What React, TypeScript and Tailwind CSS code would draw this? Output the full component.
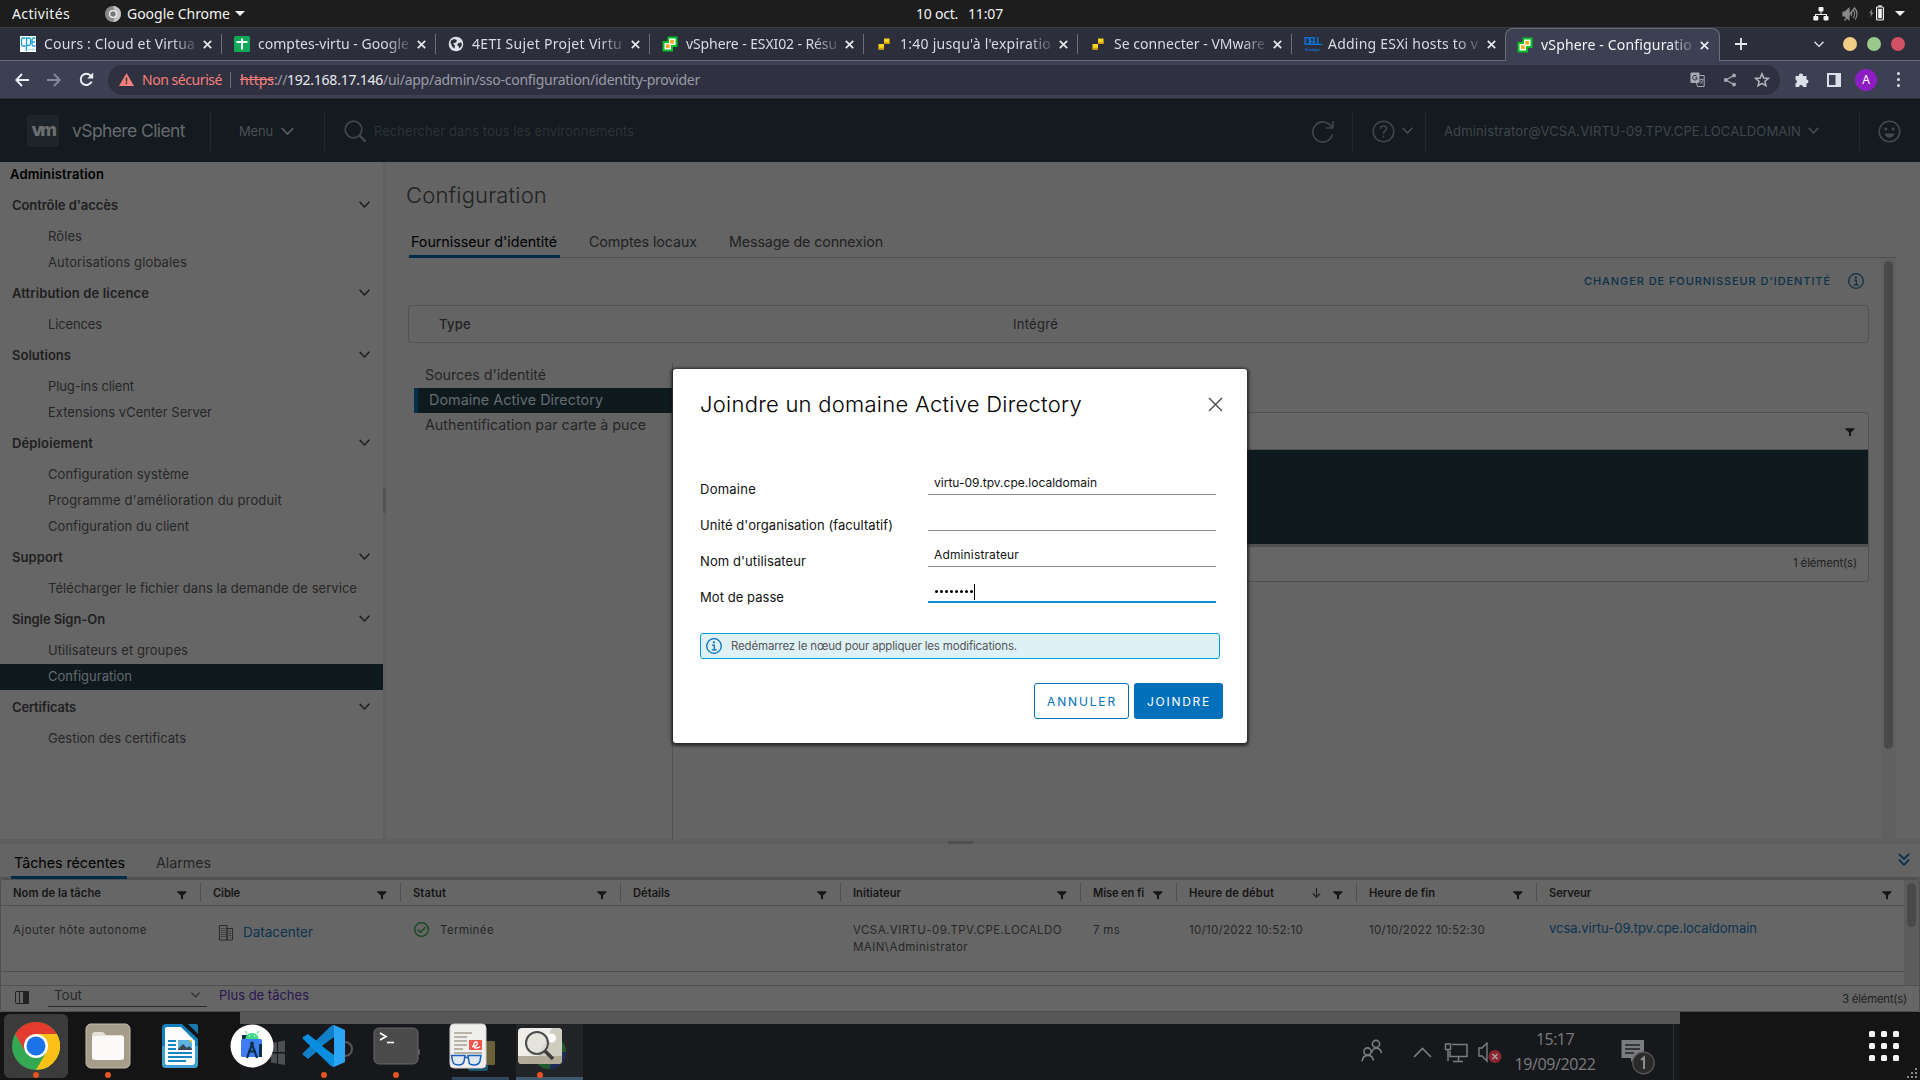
import { useLayoutEffect, useRef, useState } from "react";
import type { ReactNode } from "react";

/** One line of text tracked so that it fills exactly `w` pixels. */
function T({ w, children, className = "" }: { w: number; children: string; className?: string }) {
  const ref = useRef<HTMLSpanElement>(null);
  const [tracking, setTracking] = useState(0);
  useLayoutEffect(() => {
    if (ref.current) {
      const natural = ref.current.getBoundingClientRect().width;
      setTracking((w - natural) / children.length);
    }
  }, [w, children]);
  return (
    <span className={`block shrink-0 whitespace-pre ${className}`} style={{ width: w }}>
      <span ref={ref} style={{ letterSpacing: tracking }}>
        {children}
      </span>
    </span>
  );
}

function Chevron({ className = "", size = 11 }: { className?: string; size?: number }) {
  return (
    <svg width={size} height={size * 0.64} viewBox="0 0 11 7" className={`shrink-0 ${className}`} fill="none" stroke="currentColor" strokeWidth="1.4">
      <path d="M0.6 0.8 5.5 5.9 10.4 0.8" />
    </svg>
  );
}

function Filter({ className = "" }: { className?: string }) {
  return (
    <svg width="10" height="9" viewBox="0 0 10 9" className={`shrink-0 ${className}`} fill="#161616">
      <path d="M0.3 0.3h9.2v0.9L6 4.4V8.6L4 7.7V4.4L0.3 1.2z" />
    </svg>
  );
}

function Info({ size, className = "" }: { size: number; className?: string }) {
  return (
    <svg width={size} height={size} viewBox="0 0 16 16" className={`shrink-0 ${className}`} fill="none" stroke="currentColor">
      <circle cx="8" cy="8" r="7.3" strokeWidth="1.3" />
      <circle cx="7.9" cy="4.3" r="1.1" fill="currentColor" stroke="none" />
      <path d="M6 7.2h2.3v4.4M5.7 11.9h5" strokeWidth="1.3" />
    </svg>
  );
}

/* ---------- desktop top bar ---------- */

function TopBar() {
  return (
    <div className="flex h-[27px] shrink-0 items-center bg-[#1d1d1d] font-['Noto_Sans',sans-serif] text-[14px] leading-[20px] text-[#f2f2f2]">
      <T w={58} className="ml-[12px]">Activités</T>
      <svg width="16" height="16" viewBox="0 0 16 16" className="ml-[35px]">
        <circle cx="8" cy="8" r="8" fill="#8a8a8a" />
        <path d="M8 0a8 8 0 0 1 8 8 8 8 0 0 1-8 8l3-8z" fill="#c4c4c4" />
        <circle cx="8" cy="8" r="3.4" fill="#777" stroke="#f4f4f4" strokeWidth="1.3" />
      </svg>
      <T w={103} className="ml-[6px]">Google Chrome</T>
      <div className="ml-[5px] h-0 w-0 border-x-[5px] border-t-[5px] border-x-transparent border-t-[#f2f2f2]" />
      <T w={42} className="ml-[671px]">10 oct.</T>
      <T w={35} className="ml-[10px]">11:07</T>
      <svg width="16" height="14" viewBox="0 0 16 14" className="ml-[810px]" fill="#f2f2f2">
        <rect x="5.5" y="0" width="5" height="4.5" rx="1" />
        <rect x="0.3" y="9" width="5" height="4.6" rx="1" />
        <rect x="10.5" y="9" width="5" height="4.6" rx="1" />
        <path d="M7.5 4h1v3H14v2.4h-1V8H3v1.4H2V7h5.5z" />
      </svg>
      <svg width="16" height="14" viewBox="0 0 16 14" className="ml-[13px]" fill="none" stroke="#8a8a8a" strokeWidth="1.2">
        <path d="M1 5h2l4-3.6v11.2L3 9H1z" fill="#8a8a8a" />
        <path d="M9 5c1 1 1 3 0 4M11 3c2 2.300 2 5.700 0 8M13 1.500c2.600 3 2.600 8 0 11M2.500 13.500 13 0.500" />
      </svg>
      <svg width="16" height="16" viewBox="0 0 16 16" className="-mt-[2px] ml-[11px]">
        <path d="M3.500 3.500 0.300 8.300h2l-1 4L4.400 7.500h-2z" fill="#9a9a9a" />
        <rect x="7.600" y="2" width="6.800" height="13" rx="1" fill="none" stroke="#f2f2f2" strokeWidth="1.200" />
        <rect x="9.200" y="3.800" width="3.600" height="9.500" fill="#f2f2f2" />
        <rect x="9.300" y="0.300" width="3.400" height="1.500" fill="#f2f2f2" />
      </svg>
      <div className="ml-[10px] h-0 w-0 border-x-[5px] border-t-[5px] border-x-transparent border-t-[#f2f2f2]" />
    </div>
  );
}

/* ---------- browser tabs ---------- */

const CpeIcon = () => (
  <svg width="16" height="16" viewBox="0 0 16 16">
    <rect width="16" height="16" fill="#fff" />
    <path d="M5.500 2H3Q1.500 2 1.500 4v4Q1.500 10 3 10h2.500M6.500 15V2h2.500q1.500 0 1.500 2v3.500q0 2-1.500 2H7M15.500 2H13.500q-1.500 0-1.500 2v4q0 2 1.500 2h2M12 6h3" fill="none" stroke="#1a9fdc" strokeWidth="1.300" />
    <path d="M8.500 13.500h6.500" stroke="#7fc4e6" strokeWidth="1.500" strokeDasharray="1.200 0.600" />
  </svg>
);
const SheetIcon = () => (
  <svg width="16" height="16" viewBox="0 0 16 16">
    <rect width="16" height="16" rx="1.500" fill="#0fa958" />
    <path d="M8 2.500v11M2.500 6h11" stroke="#fff" strokeWidth="2" />
  </svg>
);
const GlobeIcon = () => (
  <svg width="16" height="16" viewBox="0 0 16 16">
    <circle cx="8" cy="8" r="7.300" fill="#dfe1ea" />
    <path d="M3 4.500 6 3l3 1-1 2.500-3 1L7 9.500l-.5 3L4.500 11 2.500 7zM10.500 7l3-.5.300 3-2.300 3-1-2.500-1.500-1z" fill="#2c2e3b" />
  </svg>
);
const VsphereIcon = () => (
  <svg width="16" height="16" viewBox="0 0 16 16">
    <path d="M5.500 0.500H15.500V11H11V15.500H0.500V5H5.500z" fill="#0bbf26" />
    <path d="M7 2.500H13.500V9H9V13.500H2.500V7H7z" fill="#fff" />
    <rect x="8.300" y="4" width="3.600" height="3.600" fill="#f7a916" />
    <rect x="4" y="8.300" width="3.600" height="3.600" fill="#f7a916" />
  </svg>
);
const VmIcon = () => (
  <svg width="16" height="16" viewBox="0 0 16 16">
    <path d="M8 2.500h5.500V8H8z" fill="#f9d71c" />
    <path d="M2.500 8h5.500v5.500H2.500z" fill="#f9d71c" />
    <path d="M8 6.300h5.500V8H8zM2.500 11.800H8v1.700H2.500z" fill="#d59a0a" />
  </svg>
);
const DellIcon = () => (
  <div className="flex h-[16px] w-[16px] flex-col items-center justify-center font-['Liberation_Sans',sans-serif] text-[#0b74d8]">
    <T w={16} className="text-[10px] leading-[10px] font-bold">DELL</T>
    <T w={15} className="text-[4px] leading-[5px]">Technologies</T>
  </div>
);

const tabs: { icon: ReactNode; title: string; w: number; active?: boolean }[] = [
  { icon: <CpeIcon />, title: "Cours : Cloud et Virtua", w: 151 },
  { icon: <SheetIcon />, title: "comptes-virtu - Google", w: 151 },
  { icon: <GlobeIcon />, title: "4ETI Sujet Projet Virtu", w: 150 },
  { icon: <VsphereIcon />, title: "vSphere - ESXI02 - Résu", w: 151 },
  { icon: <VmIcon />, title: "1:40 jusqu'à l'expiratio", w: 151 },
  { icon: <VmIcon />, title: "Se connecter - VMware", w: 151 },
  { icon: <DellIcon />, title: "Adding ESXi hosts to v", w: 150 },
  { icon: <VsphereIcon />, title: "vSphere - Configuratio", w: 151, active: true },
];

function TabStrip() {
  return (
    <div className="flex h-[34px] shrink-0 border-t border-[#3c3d45] bg-[#2c2e3b] font-['Noto_Sans',sans-serif] text-[14px] leading-[20px]">
      <div className="w-[8px] border-b border-[#6c6e7a]" />
      {tabs.map((t, i) => (
        <div
          key={i}
          className={
            t.active
              ? "-ml-px flex w-[215px] items-center rounded-t-[8px] border-x border-t border-[#6c6e7a] bg-[#3c4052] pl-[11px] text-[#f4f5f8]"
              : "flex w-[214px] items-center border-b border-[#6c6e7a] pl-[12px] text-[#d9dbe4]"
          }
        >
          {t.icon}
          <div className="ml-[8px] w-[152px] [mask-image:linear-gradient(to_right,black_84%,rgba(0,0,0,0.15)_100%)]">
            <T w={t.w}>{t.title}</T>
          </div>
          <svg width="9" height="9" viewBox="0 0 9 9" className="ml-[7px]" stroke="#e8e9ef" strokeWidth="1.700">
            <path d="M0.800 0.800 8.200 8.200M8.200 0.800 0.800 8.200" />
          </svg>
          {i < 6 && <div className="ml-[9px] h-[20px] w-px bg-[#6c6e7a]" />}
        </div>
      ))}
      <div className="flex flex-1 items-center border-b border-[#6c6e7a]">
        <svg width="12" height="12" viewBox="0 0 12 12" className="ml-[15px]" stroke="#e8e9ef" strokeWidth="1.800">
          <path d="M6 0v12M0 6h12" />
        </svg>
        <Chevron size={10} className="ml-[67px] text-[#e8e9ef]" />
        <div className="ml-[19px] h-[14px] w-[14px] rounded-full bg-[#f0ce86]" />
        <div className="ml-[10px] h-[14px] w-[14px] rounded-full bg-[#9bc98c]" />
        <div className="ml-[10px] h-[14px] w-[14px] rounded-full bg-[#d15063]" />
      </div>
    </div>
  );
}

function Toolbar() {
  return (
    <div className="flex h-[38px] shrink-0 items-center border-b border-[#2c2e3b] bg-[#3c4052] font-['Noto_Sans',sans-serif] text-[14px] leading-[20px]">
      <svg width="14" height="14" viewBox="0 0 14 14" className="ml-[15px]" fill="none" stroke="#eceef5" strokeWidth="1.900">
        <path d="M14 7H1.500M7 1 1.300 7 7 13" />
      </svg>
      <svg width="14" height="14" viewBox="0 0 14 14" className="ml-[18px]" fill="none" stroke="#84889a" strokeWidth="1.900">
        <path d="M0 7H12.500M7 1l5.700 6L7 13" />
      </svg>
      <svg width="15" height="15" viewBox="0 0 15 15" className="ml-[18px]" fill="none" stroke="#eceef5" strokeWidth="2">
        <path d="M12.600 9.700A5.700 5.700 0 1 1 11.800 3.700" />
        <path d="M14.200 0.500v6H8.200z" fill="#eceef5" stroke="none" />
      </svg>
      <div className="ml-[14px] flex h-[30px] w-[1672px] items-center rounded-full bg-[#2f3140]">
        <svg width="15" height="13" viewBox="0 0 15 13" className="ml-[11px]">
          <path d="M7.500 0 15 13H0z" fill="#f77f7b" />
          <path d="M7.500 4.500v4M7.500 9.500v1.500" stroke="#2f3140" strokeWidth="1.500" />
        </svg>
        <T w={80} className="ml-[8px] text-[#f77f7b]">Non sécurisé</T>
        <div className="ml-[8px] h-[16px] w-px bg-[#6c6e7a]" />
        <T w={34} className="ml-[9px] text-[#f77f7b] line-through">https</T>
        <T w={13} className="text-[#9a9ca8]">://</T>
        <T w={96} className="text-[#e8e9f0]">192.168.17.146</T>
        <T w={317} className="text-[#9a9ca8]">/ui/app/admin/sso-configuration/identity-provider</T>
        <svg width="15" height="15" viewBox="0 0 15 15" className="ml-[990px]" fill="none">
          <rect x="0.500" y="0.500" width="9" height="10.500" rx="1" fill="#a6a9b6" />
          <path d="M6.800 4.400A2.300 2.300 0 1 0 7.200 6H5.200" stroke="#2f3140" strokeWidth="1" />
          <path d="M9.500 3.500h4.700v11H7.500l-1-3.500" stroke="#a6a9b6" />
          <path d="M9.800 7.500h3.700M11.700 6.300v1.200M13 7.500c-.5 2-1.500 3-2.800 4M10.500 8.500c.5 1.300 1.500 2.500 2.700 3" stroke="#a6a9b6" strokeWidth="0.800" />
        </svg>
        <svg width="14" height="14" viewBox="0 0 14 14" className="ml-[18px]" fill="#a6a9b6">
          <circle cx="2.800" cy="7" r="2" />
          <circle cx="11" cy="2.500" r="1.900" />
          <circle cx="11" cy="11.500" r="1.900" />
          <path d="M11 2.500 2.800 7 11 11.500" fill="none" stroke="#a6a9b6" strokeWidth="1.400" />
        </svg>
        <svg width="16" height="16" viewBox="0 0 16 16" className="ml-[17px]" fill="none" stroke="#b4b6c2" strokeWidth="1.500">
          <path d="M8 1.800 9.800 6l4.500.400-3.400 3 1 4.400L8 11.400l-3.900 2.400 1-4.400-3.400-3L6.200 6z" />
        </svg>
      </div>
      <svg width="16" height="16" viewBox="0 0 16 16" className="ml-[14px]" fill="#dcdeea">
        <path d="M1.500 4H5a2 2 0 1 1 3.900 0H12.500v3.500a2 2 0 1 1 0 4V15H9a2 2 0 0 0-4 0H1.500v-3.600a2 2 0 0 0 0-3.800z" />
      </svg>
      <svg width="14" height="14" viewBox="0 0 14 14" className="ml-[17px]" fill="none" stroke="#dcdeea" strokeWidth="2">
        <path d="M1 1h12v12H1z" />
        <path d="M8.500 1H13v12H8.500z" fill="#dcdeea" stroke="none" />
      </svg>
      <div className="ml-[14px] flex h-[22px] w-[22px] items-center justify-center rounded-full bg-[#8c1dc2] text-[12px] text-white">A</div>
      <div className="ml-[20px] flex flex-col gap-[3px]">
        <div className="h-[3px] w-[3px] rounded-full bg-[#dcdeea]" />
        <div className="h-[3px] w-[3px] rounded-full bg-[#dcdeea]" />
        <div className="h-[3px] w-[3px] rounded-full bg-[#dcdeea]" />
      </div>
    </div>
  );
}

/* ---------- vSphere header ---------- */

function Header() {
  return (
    <div className="flex h-[63px] shrink-0 items-center bg-[#131a20] pt-px">
      <div className="ml-[27px] flex h-[32px] w-[32px] items-center justify-center rounded-[3px] bg-[#1e252a]">
        <T w={23} className="-mt-[3px] text-[18px] leading-[18px] font-extrabold text-[#6c6e70]">vm</T>
      </div>
      <T w={113} className="ml-[13px] text-[17.500px] leading-[24px] text-[#686b6e]">vSphere Client</T>
      <div className="ml-[25px] h-[40px] w-px bg-[#22292e]" />
      <T w={34} className="ml-[28px] text-[13px] leading-[18px] text-[#4a4f53]">Menu</T>
      <Chevron size={13} className="ml-[8px] text-[#5a5e61]" />
      <div className="ml-[30px] h-[40px] w-px bg-[#22292e]" />
      <svg width="23" height="23" viewBox="0 0 23 23" className="ml-[19px]" fill="none" stroke="#45494c">
        <circle cx="9.500" cy="9.500" r="8.300" strokeWidth="1.700" />
        <path d="m15.500 15.500 6 6" strokeWidth="2.400" />
      </svg>
      <T w={260} className="ml-[7px] text-[13px] leading-[18px] text-[#2c3236]">Rechercher dans tous les environnements</T>
      <svg width="23" height="23" viewBox="0 0 23 23" className="ml-[677px]" fill="none" stroke="#3f4548" strokeWidth="1.700">
        <path d="M21.500 14.500A10 10 0 1 1 20.500 7M21.800 1v7h-7" />
      </svg>
      <div className="ml-[18px] h-[40px] w-px bg-[#22292e]" />
      <svg width="23" height="23" viewBox="0 0 23 23" className="ml-[19px]" fill="none" stroke="#3f4548" strokeWidth="1.600">
        <circle cx="11.500" cy="11.500" r="10.300" />
        <path d="M8.300 8.600c.2-3.600 6.300-3.400 6.300-.1 0 2.200-3.100 2.200-3.100 5.300M11.500 15.500v2" />
      </svg>
      <Chevron className="ml-[7px] text-[#4c5154]" />
      <div className="ml-[12px] h-[40px] w-px bg-[#22292e]" />
      <T w={357} className="ml-[18px] text-[13px] leading-[18px] text-[#41464a]">Administrator@VCSA.VIRTU-09.TPV.CPE.LOCALDOMAIN</T>
      <Chevron className="ml-[7px] text-[#4c5154]" />
      <div className="ml-[40px] h-[40px] w-px bg-[#22292e]" />
      <svg width="23" height="23" viewBox="0 0 23 23" className="ml-[18px]" fill="none" stroke="#45494c" strokeWidth="1.600">
        <circle cx="11.500" cy="11.500" r="10.300" />
        <circle cx="7.800" cy="9" r="0.800" fill="#45494c" />
        <circle cx="15.200" cy="9" r="0.800" fill="#45494c" />
        <path d="M6.500 13.500h10c-.5 5.500-9.500 5.500-10 0z" fill="#45494c" stroke="none" />
      </svg>
    </div>
  );
}

/* ---------- sidebar ---------- */

const nav: { title: string; w: number; items: { label: string; w: number; selected?: boolean }[] }[] = [
  { title: "Contrôle d'accès", w: 106, items: [{ label: "Rôles", w: 34 }, { label: "Autorisations globales", w: 139 }] },
  { title: "Attribution de licence", w: 137, items: [{ label: "Licences", w: 54 }] },
  { title: "Solutions", w: 59, items: [{ label: "Plug-ins client", w: 86 }, { label: "Extensions vCenter Server", w: 164 }] },
  {
    title: "Déploiement",
    w: 81,
    items: [
      { label: "Configuration système", w: 141 },
      { label: "Programme d'amélioration du produit", w: 234 },
      { label: "Configuration du client", w: 141 },
    ],
  },
  { title: "Support", w: 51, items: [{ label: "Télécharger le fichier dans la demande de service", w: 309 }] },
  { title: "Single Sign-On", w: 93, items: [{ label: "Utilisateurs et groupes", w: 140 }, { label: "Configuration", w: 84, selected: true }] },
  { title: "Certificats", w: 64, items: [{ label: "Gestion des certificats", w: 138 }] },
];

function Sidebar() {
  return (
    <div className="w-[383px] shrink-0 bg-[#666] text-[13px] leading-[18px]">
      <div className="flex h-[26px] items-center pb-[2px] pl-[10px]">
        <T w={94} className="font-semibold text-black">Administration</T>
      </div>
      {nav.map((g) => (
        <div key={g.title}>
          <div className="flex h-[36px] items-center justify-between pr-[13px] pb-[2px] pl-[12px]">
            <T w={g.w} className="font-semibold text-[#202020]">{g.title}</T>
            <Chevron className="text-[#1c1c1c]" />
          </div>
          {g.items.map((it) => (
            <div
              key={it.label}
              className={
                it.selected
                  ? "flex h-[26px] items-center bg-[#0f1a1f] pb-[2px] pl-[48px] text-[#64696c]"
                  : "flex h-[26px] items-center pb-[2px] pl-[48px] text-[#262626]"
              }
            >
              <T w={it.w}>{it.label}</T>
            </div>
          ))}
        </div>
      ))}
    </div>
  );
}

/* ---------- main configuration page ---------- */

function Page() {
  return (
    <div className="flex min-w-0 flex-1 flex-col bg-[#646464] pl-[22px]">
      <div className="flex h-[67px] items-center pb-[2px]">
        <T w={141} className="-ml-[2px] text-[22px] leading-[30px] font-light text-[#222]">Configuration</T>
      </div>
      <div className="mr-[24px] flex h-[29px] border-b border-[#505050] text-[14.300px] leading-[20px]">
        <div className="ml-[1px] h-[29px] w-[151px] border-b-[3px] border-[#002c47] pt-[3px] pl-[2px]">
          <T w={146} className="text-black">Fournisseur d'identité</T>
        </div>
        <T w={108} className="mt-[3px] ml-[29px] text-[#222]">Comptes locaux</T>
        <T w={154} className="mt-[3px] ml-[32px] text-[#222]">Message de connexion</T>
      </div>
      <div className="mr-[24px] flex min-h-0 flex-1">
        <div className="flex min-w-0 flex-1 flex-col">
          <div className="flex h-[47px] items-center justify-end pb-[2px] text-[#0b3049]">
            <T w={247} className="text-[11px] leading-[16px] font-medium">CHANGER DE FOURNISSEUR D'IDENTITÉ</T>
            <Info size={16} className="mr-[17px] ml-[17px]" />
          </div>
          <div className="mr-[12px] flex h-[38px] shrink-0 items-center rounded-[3px] border border-[#535353] pb-px text-[13px] leading-[18px] text-[#222]">
            <T w={32} className="ml-[30px] font-medium">Type</T>
            <T w={45} className="ml-[542px]">Intégré</T>
          </div>
          <div className="mt-[20px] mr-[12px] flex min-h-0 flex-1">
            <div className="w-[265px] shrink-0 border-r border-[#505050] text-[14.300px] leading-[20px] text-[#262626]">
              <div className="flex h-[25px] items-center pb-[2px] pl-[17px]">
                <T w={121}>Sources d'identité</T>
              </div>
              <div className="ml-[6px] flex h-[25px] items-center border-l-4 border-[#00304d] bg-[#0f1a1f] pb-[2px] pl-[11px] text-[#666b6e]">
                <T w={174}>Domaine Active Directory</T>
              </div>
              <div className="flex h-[25px] items-center pb-[2px] pl-[17px]">
                <T w={221}>Authentification par carte à puce</T>
              </div>
            </div>
            <div className="mt-[49px] ml-[20px] flex h-[170px] flex-1 flex-col rounded-[3px] border border-[#505050] bg-[#666]">
              <div className="flex h-[37px] shrink-0 items-center justify-end border-b border-[#505050] pt-[3px] pr-[13px]">
                <Filter />
              </div>
              <div className="h-[94px] shrink-0 bg-[#0f1a1f]" />
              <div className="h-[3px] shrink-0 bg-[#505050]" />
              <div className="flex flex-1 items-center justify-end pr-[11px] pb-[2px]">
                <T w={64} className="text-[11.500px] leading-[16px] text-[#222]">1 élément(s)</T>
              </div>
            </div>
          </div>
        </div>
        <div className="w-[15px] shrink-0 bg-[#606060] pt-[3px] pl-[3px]">
          <div className="h-[488px] w-[9px] rounded-full bg-[#494949]" />
        </div>
      </div>
    </div>
  );
}

/* ---------- dialog ---------- */

function Dialog() {
  return (
    <div className="absolute top-[369px] left-[673px] flex h-[374px] w-[574px] flex-col rounded-[3px] bg-white text-[13px] leading-[18px] text-[#111] shadow-[0_1px_3px_2px_rgba(20,20,20,0.7)]">
      <div className="mt-[20px] flex h-[30px] items-center pl-[27px]">
        <T w={382} className="text-[22px] leading-[30px] font-light text-black">Joindre un domaine Active Directory</T>
        <svg width="15" height="15" viewBox="0 0 15 15" className="ml-[126px]" stroke="#444" strokeWidth="1.300">
          <path d="M1 1l13 13M14 1 1 14" />
        </svg>
      </div>
      <div className="mt-[52px] flex flex-col gap-[12px] pl-[27px]">
        <div className="flex h-[24px]">
          <T w={56} className="mt-[9px]">Domaine</T>
          <div className="ml-[172px] h-[24px] w-[288px] border-b border-[#8c8c8c] pt-[3px] pl-[6px]">
            <T w={163} className="text-[12px] leading-[18px]">virtu-09.tpv.cpe.localdomain</T>
          </div>
        </div>
        <div className="flex h-[24px]">
          <T w={193} className="mt-[9px]">Unité d'organisation (facultatif)</T>
          <div className="ml-[35px] h-[24px] w-[288px] border-b border-[#8c8c8c]" />
        </div>
        <div className="flex h-[24px]">
          <T w={106} className="mt-[9px]">Nom d'utilisateur</T>
          <div className="ml-[122px] h-[24px] w-[288px] border-b border-[#8c8c8c] pt-[3px] pl-[6px]">
            <T w={85} className="text-[12px] leading-[18px]">Administrateur</T>
          </div>
        </div>
        <div className="flex h-[24px]">
          <T w={84} className="mt-[9px]">Mot de passe</T>
          <div className="ml-[144px] flex h-[24px] w-[288px] items-center gap-[2px] border-b-2 border-[#0a8fd6] pl-[7px]">
            {[0, 1, 2, 3, 4, 5, 6, 7].map((d) => (
              <div key={d} className="mt-[3px] h-[3px] w-[3px] rounded-full bg-black" />
            ))}
            <div className="mt-[4px] -ml-px h-[16px] w-px bg-black" />
          </div>
        </div>
      </div>
      <div className="mt-[30px] ml-[27px] flex h-[26px] w-[520px] items-center rounded-[3px] border border-[#00a5cf] bg-[#def1f7] text-[#0070bb]">
        <Info size={16} className="ml-[5px]" />
        <T w={286} className="ml-[9px] text-[11.500px] leading-[16px] text-[#565656]">Redémarrez le nœud pour appliquer les modifications.</T>
      </div>
      <div className="mt-[24px] flex gap-[5px] pl-[361px] text-[12px] leading-[16px]">
        <div className="flex h-[36px] w-[95px] items-center rounded-[3px] border border-[#0070bb] pt-[2px] pl-[12px] text-[#0070bb]">
          <T w={70}>ANNULER</T>
        </div>
        <div className="flex h-[36px] w-[89px] items-center rounded-[3px] bg-[#0070bb] pt-[2px] pl-[13px] text-white">
          <T w={64}>JOINDRE</T>
        </div>
      </div>
    </div>
  );
}

/* ---------- recent tasks ---------- */

const columns: { title: string; tw: number; w: string; sort?: boolean }[] = [
  { title: "Nom de la tâche", tw: 88, w: "w-[200px] pl-[12px]" },
  { title: "Cible", tw: 27, w: "w-[200px] pl-[12px]" },
  { title: "Statut", tw: 33, w: "w-[220px] pl-[12px]" },
  { title: "Détails", tw: 37, w: "w-[220px] pl-[12px]" },
  { title: "Initiateur", tw: 48, w: "w-[240px] pl-[12px]" },
  { title: "Mise en fi", tw: 51, w: "w-[96px] pl-[12px]" },
  { title: "Heure de début", tw: 85, w: "w-[180px] pl-[12px]", sort: true },
  { title: "Heure de fin", tw: 66, w: "w-[180px] pl-[12px]" },
  { title: "Serveur", tw: 42, w: "w-[368px] pl-[12px]" },
];

function Tasks() {
  return (
    <div className="flex h-[168px] shrink-0 flex-col bg-[#646464] text-[11.500px] leading-[17px]">
      <div className="flex h-[35px] shrink-0 border-b-2 border-[#525252] text-[14.300px] leading-[20px]">
        <div className="ml-[11px] h-[35px] w-[116px] border-b-[3px] border-[#002c47] pt-[9px] pl-[3px]">
          <T w={111} className="text-black">Tâches récentes</T>
        </div>
        <T w={55} className="mt-[9px] ml-[29px] text-[#262626]">Alarmes</T>
        <svg width="12" height="13" viewBox="0 0 12 13" className="mt-[9px] ml-[1687px]" fill="none" stroke="#07304d" strokeWidth="1.800">
          <path d="M0.800 0.800 6 6l5.200-5.200M0.800 6.600 6 11.800l5.200-5.200" />
        </svg>
      </div>
      <div className="flex min-h-0 flex-1 flex-col rounded-[3px] border border-[#505050] bg-[#666]">
        <div className="flex h-[106px] shrink-0 border-b border-[#505050]">
          <div className="w-[1903px] shrink-0">
            <div className="flex h-[26px] items-center border-b border-[#505050] text-[#161616]">
              {columns.map((c, i) => (
                <div key={c.title} className={`flex h-[19px] shrink-0 items-center ${i < 8 ? "border-r border-[#505050]" : ""} ${c.w}`}>
                  <T w={c.tw} className="pt-[2px] text-[11.200px] font-semibold">{c.title}</T>
                  <div className="flex flex-1 items-center justify-end gap-[12px] pr-[13px]">
                    {c.sort && (
                      <svg width="9" height="10" viewBox="0 0 9 10" fill="none" stroke="#222" strokeWidth="1.200">
                        <path d="M4.500 0v9M0.800 5.500l3.700 3.700 3.700-3.700" />
                      </svg>
                    )}
                    <Filter className="mt-[6px]" />
                  </div>
                </div>
              ))}
            </div>
            <div className="flex h-[66px] border-b border-[#505050] pt-[16px] text-[#262626]">
              <T w={134} className="ml-[12px]">Ajouter hôte autonome</T>
              <svg width="14" height="16" viewBox="0 0 14 16" className="mt-[3px] ml-[72px]" fill="none" stroke="#2a2a2a">
                <path d="M0.500 0.500h7.500v14.500H0.500zM8 3.500h5.500v11.500H8z" />
                <path d="M2.500 3v9.500M4.200 3v9.500M6 3v9.500M10 6v6.500M11.700 6v6.500" strokeDasharray="1 1" />
              </svg>
              <T w={70} className="mt-[2px] ml-[10px] text-[13.500px] text-[#0c3350]">Datacenter</T>
              <svg width="15" height="15" viewBox="0 0 15 15" className="ml-[101px]" fill="none" stroke="#0d4416" strokeWidth="1.200">
                <circle cx="7.500" cy="7.500" r="6.800" />
                <path d="m3.800 7.500 2.700 2.900 5-5.400" />
              </svg>
              <T w={54} className="ml-[11px]">Terminée</T>
              <div className="ml-[359px] w-[209px]">
                <T w={209}>VCSA.VIRTU-09.TPV.CPE.LOCALDO</T>
                <T w={115}>MAIN\Administrator</T>
              </div>
              <T w={27} className="ml-[31px]">7 ms</T>
              <T w={114} className="ml-[69px]">10/10/2022 10:52:10</T>
              <T w={116} className="ml-[66px]">10/10/2022 10:52:30</T>
              <T w={208} className="-mt-[2px] ml-[64px] text-[13px] text-[#0c3350]">vcsa.virtu-09.tpv.cpe.localdomain</T>
            </div>
          </div>
          <div className="w-[15px] shrink-0 bg-[#5c5c5c] pt-[3px] pl-[3px]">
            <div className="h-[44px] w-[9px] rounded-full bg-[#494949]" />
          </div>
        </div>
        <div className="flex flex-1">
          <svg width="14" height="13" viewBox="0 0 14 13" className="mt-[5px] ml-[14px]" fill="none" stroke="#222">
            <rect x="0.500" y="0.500" width="13" height="12" rx="1" />
            <path d="M4.500 0.500v12" />
            <path d="M8.500 0.500h5v12h-5z" fill="#222" />
          </svg>
          <div className="ml-[19px] flex h-[21px] w-[159px] justify-between border-b border-[#2a2a2a] pr-[7px] pl-[6px] text-[13.500px] leading-[18px] text-[#2a2a2a]">
            <T w={28}>Tout</T>
            <Chevron size={9} className="mt-[6px]" />
          </div>
          <T w={90} className="ml-[12px] text-[13px] leading-[18px] text-[#2b1550]">Plus de tâches</T>
          <T w={65} className="mt-[5px] ml-[1533px] text-[#222]">3 élément(s)</T>
        </div>
      </div>
    </div>
  );
}

/* ---------- dock ---------- */

function Slot({ children, running, focused }: { children: ReactNode; running?: boolean; focused?: boolean }) {
  return (
    <div className="flex w-[72px] shrink-0 justify-center pt-[2px]">
      <div className={`flex h-[64px] w-[64px] flex-col items-center rounded-[6px] pt-[8px] ${focused ? "bg-[#3b3b3b]" : ""}`}>
        {children}
        {running && <div className="mt-[2px] h-[6px] w-[6px] rounded-full bg-[#e95420]" />}
      </div>
    </div>
  );
}

function Dock() {
  return (
    <div className="relative flex h-[68px] shrink-0 bg-[#141414]">
      <div className="absolute top-0 left-[240px] flex h-[68px] w-[1440px] flex-col bg-[#17181b] font-['Open_Sans',sans-serif]">
        <div className="h-[12px] shrink-0 bg-[#575757]" />
        <div className="flex flex-1">
          <svg width="350" height="56" viewBox="0 0 350 56" className="shrink-0">
            <path d="M31 19l6-1v10h-6zM38 17.800l7-1.300V28h-7zM31 29.500h6v10l-6-1zM38 29.500h7V41l-7-1.300z" fill="#4d4e50" />
            <circle cx="105" cy="25" r="7" fill="none" stroke="#55565a" strokeWidth="2" />
            <rect x="276" y="0" width="67" height="56" fill="#222428" />
            <rect x="228" y="27" width="20" height="20" rx="2" fill="#17566e" />
            <rect x="245" y="17" width="10" height="24" rx="1" fill="#6a6038" />
            <circle cx="309" cy="28" r="17" fill="#1f5b2d" />
            <path d="M309 45a17 17 0 0 0 17-17l-10 0z" fill="#1d2c5c" />
            <rect x="178" y="25" width="2" height="6" rx="1" fill="#55565a" />
            <rect x="212" y="53" width="57" height="3" fill="#2f475c" />
            <rect x="276" y="53" width="67" height="3" fill="#3f5a70" />
          </svg>
          <svg width="22" height="24" viewBox="0 0 22 24" className="mt-[15px] ml-[771px] shrink-0" fill="none" stroke="#7b7c80" strokeWidth="1.600">
            <circle cx="15" cy="5" r="3.600" />
            <path d="M10.500 14c1-6 8.500-6.500 10 0" />
            <circle cx="6.500" cy="12.500" r="3.600" />
            <path d="M1 22.500c1-8 10-8 11.500-1" />
          </svg>
          <svg width="19" height="11" viewBox="0 0 19 11" className="mt-[23px] ml-[30px] shrink-0" fill="none" stroke="#7b7c80" strokeWidth="1.700">
            <path d="M1 10 9.500 1.500 18 10" />
          </svg>
          <svg width="24" height="20" viewBox="0 0 24 20" className="mt-[19px] ml-[12px] shrink-0" fill="none" stroke="#7b7c80" strokeWidth="1.500">
            <path d="M8 1.500h15v12H6V8M14.500 13.500V18M9 18.500h10" />
            <path d="M1.500 1h5v5.500h-5zM4 6.500V18" />
          </svg>
          <svg width="26" height="22" viewBox="0 0 26 22" className="mt-[18px] ml-[10px] shrink-0" fill="none" stroke="#7b7c80" strokeWidth="1.400">
            <path d="M1 6h3l5-5v18l-5-5H1z" />
            <circle cx="17" cy="14.500" r="6.500" fill="#8d2530" stroke="none" />
            <path d="m14.500 12 5 5m0-5-5 5" stroke="#aaa" />
          </svg>
          <div className="ml-[10px] flex w-[82px] flex-col items-center pt-[3px] text-[16px] leading-[25px] text-[#7b7c80]">
            <T w={38}>15:17</T>
            <T w={81}>19/09/2022</T>
          </div>
          <svg width="34" height="42" viewBox="0 0 34 42" className="mt-[14px] ml-[25px] shrink-0">
            <path d="M0.500 2h22.500v18H14l-4 4v-4H0.500z" fill="#7b7c80" />
            <path d="M4 7h15M4 11h15M4 15h9" stroke="#222" strokeWidth="1.500" />
            <circle cx="22.500" cy="25" r="10.800" fill="#2a2a2b" stroke="#555" strokeWidth="1.300" />
            <path d="M20 22l3-2.500V31" fill="none" stroke="#8d8e90" strokeWidth="2" />
          </svg>
          <div className="ml-[18px] w-px bg-[#2c2d31]" />
        </div>
      </div>

      <div className="relative flex">
        <Slot running focused>
          <svg width="48" height="48" viewBox="0 0 48 48">
            <circle cx="24" cy="24" r="24" fill="#34a853" />
            <path d="M3.200 12A24 24 0 0 1 44.800 12H24L13.600 30z" fill="#e33b2e" />
            <path d="M44.800 12A24 24 0 0 1 24 48L34.400 30 24 12z" fill="#fbc116" />
            <circle cx="24" cy="24" r="12" fill="#fff" />
            <circle cx="24" cy="24" r="9.500" fill="#1a73e8" />
          </svg>
        </Slot>
        <Slot running>
          <svg width="48" height="48" viewBox="0 0 48 48">
            <rect x="2" y="2" width="44" height="44" rx="5" fill="#a69d8b" stroke="#c4bca9" />
            <path d="M8 13q0-3 3-3h8l3 3h15q3 0 3 3v19q0 3-3 3H11q-3 0-3-3z" fill="#e6e2da" />
            <rect x="8" y="14" width="32" height="24" rx="3" fill="#fbfaf8" />
          </svg>
        </Slot>
        <Slot>
          <svg width="48" height="48" viewBox="0 0 48 48">
            <path d="M10 2h16l16 15v25q0 4-4 4H10q-4 0-4-4V6q0-4 4-4z" fill="#1380bd" />
            <path d="M6 24h36v18q0 4-4 4H10q-4 0-4-4z" fill="#3f9fd0" />
            <path d="M32 2h8q2 0 2 2v8z" fill="#1b78ad" />
            <path d="M11 5h14l14 14v21q0 3-3 3H11q-2 0-2-3V7q0-2 2-2z" fill="#fbfbfb" />
            <path d="M12 19h8M12 23h8M12 27h8M12 31h24M12 35h24M12 39h18" stroke="#1a84c0" strokeWidth="1.800" />
            <path d="M22 18h14v10H22z" fill="#5db4e3" />
            <path d="m22 27 5-5 4 4 2-2 3 3v1H22z" fill="#3d4852" />
            <path d="M33 18h3v3z" fill="#f5c51c" />
          </svg>
        </Slot>
        <Slot>
          <svg width="48" height="48" viewBox="0 0 48 48">
            <circle cx="24" cy="24" r="21.500" fill="#fff" />
            <path d="M14 13h8v5h-8z" fill="#073042" />
            <rect x="13" y="17" width="21" height="18" rx="1.500" fill="#3f7df5" />
            <path d="M17.500 17c0-8 13-8 13 0z" fill="#3ddc84" />
            <path d="m19 12-2-3M29 12l2-3" stroke="#3ddc84" />
            <circle cx="21.500" cy="14" r="0.700" fill="#fff" />
            <circle cx="26.500" cy="14" r="0.700" fill="#fff" />
            <path d="m24 22-5 14M24 22l5 14M20 29.500h8" stroke="#073042" strokeWidth="2.200" fill="none" />
            <circle cx="24" cy="21.500" r="2" fill="#073042" />
            <path d="M32.500 22v13" stroke="#073042" strokeWidth="3" />
          </svg>
        </Slot>
        <Slot running>
          <svg width="48" height="48" viewBox="0 0 48 48">
            <path d="M34 3 45 8v32l-11 5-3-2V5z" fill="#2aa5f3" />
            <path d="M34 3v12L8 37l-5-4q-1-1 0-2L31 4z" fill="#1180c9" />
            <path d="M34 45V33L8 12l-5 3q-1 1 0 2l28 27z" fill="#0a8fe0" />
            <path d="M34 15v18L22 24z" fill="#17181b" />
          </svg>
        </Slot>
        <Slot running>
          <svg width="48" height="48" viewBox="0 0 48 48">
            <rect x="2" y="6" width="44" height="36" rx="5" fill="#4b4b4b" stroke="#686868" />
            <path d="m8 11 6 3.500L8 18" fill="none" stroke="#fff" strokeWidth="1.800" />
            <path d="M15 20.500h7" stroke="#fff" strokeWidth="1.600" />
          </svg>
        </Slot>
        <Slot>
          <svg width="48" height="48" viewBox="0 0 48 48">
            <rect x="6" y="2" width="36" height="44" rx="4" fill="#efefee" stroke="#d4d2ce" />
            <path d="M10 11h18M10 15h13M10 19h13M10 23h13M10 27h9M10 31h28" stroke="#a89f8f" strokeWidth="1.500" />
            <rect x="25" y="18" width="13" height="10" fill="#f1564c" />
            <path d="M28 24.500c6 0 6.500-4.500 4-4.500s-3.500 6 0 6c2 0 3-.5 4-1.500" fill="none" stroke="#fff" strokeWidth="1.300" />
            <path d="M7.500 33.500h13.500l-1 6q-1 3.500-5.500 3.500-5.500 0-6-4.500zM24 33.500h13l-1 5.500q-1 4-6 4t-5-3z" fill="#c9dcf3" fillOpacity="0.400" stroke="#1c60bb" strokeWidth="1.500" />
            <path d="M21 36q1.500-1.500 3 0" stroke="#1c60bb" strokeWidth="1.500" fill="none" />
          </svg>
        </Slot>
        <Slot running>
          <svg width="48" height="48" viewBox="0 0 48 48">
            <rect x="2" y="6" width="44" height="36" rx="4" fill="#efeee8" />
            <path d="M36 6h6q4 0 4 4v24H22z" fill="#cfccc0" />
            <path d="M2 34h44v4q0 4-4 4H6q-4 0-4-4z" fill="#b3ab97" />
            <circle cx="35.500" cy="16" r="4.500" fill="#fff" />
            <circle cx="21" cy="21" r="11" fill="#dfe0d8" fillOpacity="0.700" stroke="#4b4b4b" strokeWidth="2" />
            <path d="m29 29 8 8" stroke="#3d3d3d" strokeWidth="3.500" />
          </svg>
        </Slot>
      </div>

      <div className="mt-[19px] ml-[1293px] grid h-[30px] w-[30px] shrink-0 grid-cols-3 gap-[6px]">
        {[0, 1, 2, 3, 4, 5, 6, 7, 8].map((d) => (
          <div key={d} className="h-[6px] w-[6px] rounded-[1.500px] bg-[#f4f4f4]" />
        ))}
      </div>
      <svg width="12" height="12" viewBox="0 0 12 12" className="mt-[55px] ml-[8px] shrink-0" fill="#8a8a8a">
        <path d="M8 1h2v2H8zM8 5h2v2H8zM4 5h2v2H4zM8 9h2v2H8zM4 9h2v2H4zM0 9h2v2H0z" />
      </svg>
    </div>
  );
}

export default function App() {
  return (
    <div className="relative flex h-[1080px] w-[1920px] flex-col overflow-hidden bg-[#141414] font-['Inter',sans-serif]">
      <TopBar />
      <TabStrip />
      <Toolbar />
      <Header />
      <div className="flex h-[677px] shrink-0">
        <Sidebar />
        <div className="flex w-[3px] shrink-0 items-center bg-[#5f5f5f]">
          <div className="h-[25px] w-[3px] bg-[#525252]" />
        </div>
        <Page />
      </div>
      <div className="flex h-[5px] shrink-0 items-end bg-[#5f5f5f] pl-[948px]">
        <div className="h-[3px] w-[25px] bg-[#505050]" />
      </div>
      <Tasks />
      <Dock />
      <Dialog />
    </div>
  );
}
